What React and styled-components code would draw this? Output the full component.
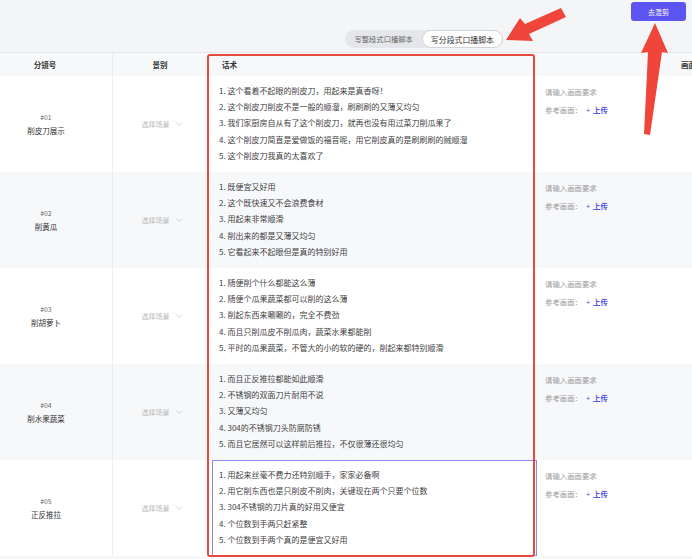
import React from "react";
import styled, { createGlobalStyle, css } from "styled-components";

const GlobalStyle = createGlobalStyle`
  html, body {
    margin: 0;
    padding: 0;
    overflow: hidden;
    background: #fff;
  }
  body {
    font-family: "Noto Sans CJK SC", "Noto Sans", sans-serif;
  }
`;

const COLS = "113px 94px 328px 307px";

const Page = styled.div`
  position: relative;
  width: 100vw;
  height: 100vh;
  overflow: hidden;
`;

const Toolbar = styled.header`
  box-sizing: border-box;
  height: 53px;
  display: flex;
  flex-direction: column;
  background: #f4f5f7;
  border-bottom: 1px solid #e6e7ea;
`;

const ButtonRow = styled.div`
  display: flex;
  justify-content: flex-end;
  padding: 2px 6px 0 0;
`;

const MixButton = styled.button`
  width: 55px;
  height: 19px;
  border: none;
  border-radius: 3px;
  background: #5c55f1;
  color: #fff;
  font-family: inherit;
  font-size: 7px;
  padding: 0;
  cursor: pointer;
`;

const ToggleRow = styled.div`
  display: flex;
  justify-content: flex-end;
  padding: 9px 189px 0 0;
`;

const Toggle = styled.div`
  display: flex;
  align-items: center;
  height: 18px;
  border-radius: 9px;
  background: #e5e6e9;
`;

const ToggleOption = styled.div`
  box-sizing: border-box;
  height: 18px;
  display: flex;
  align-items: center;
  padding: 0 9px;
  border-radius: 9px;
  font-size: 7.3px;
  color: #666;
  white-space: nowrap;
  ${(p) =>
    p.$active &&
    css`
      background: #fff;
      border: 1px solid #d3d4d8;
      color: #333;
      font-size: 7.9px;
      padding: 0 8px;
    `}
`;

const Table = styled.div`
  position: relative;
`;

const HeaderRow = styled.div`
  display: grid;
  grid-template-columns: ${COLS};
  height: 23px;
  background: #f7f8fa;
  font-size: 7.5px;
  font-weight: 600;
  color: #333;
`;

const HeadCell = styled.div`
  display: flex;
  align-items: center;
  justify-content: ${(p) => (p.$left ? "flex-start" : "center")};
  padding-left: ${(p) => (p.$left ? "15px" : "0")};
  padding-right: ${(p) => (p.$first ? "22px" : "0")};
  border-right: ${(p) => (p.$first ? "1px solid #eceef0" : "none")};
  white-space: nowrap;
`;

const Row = styled.div`
  display: grid;
  grid-template-columns: ${COLS};
  height: 96px;
  background: ${(p) => (p.$shade ? "#f7f8fa" : "#fff")};
`;

const IdCell = styled.div`
  display: flex;
  flex-direction: column;
  align-items: center;
  justify-content: center;
  padding-right: 20px;
  border-right: 1px solid #eceef0;
`;

const ShotNo = styled.span`
  font-size: 6.8px;
  line-height: 13px;
  color: #666;
`;

const ShotName = styled.span`
  font-size: 7.5px;
  line-height: 13px;
  color: #333;
`;

const SceneCell = styled.div`
  display: flex;
  align-items: center;
  justify-content: center;
  gap: 6px;
  padding-left: 4px;
  font-size: 7px;
  color: #b8b8b8;
`;

const ScriptCell = styled.div`
  position: relative;
  padding: 7px 0 0 12px;
  ${(p) =>
    p.$active &&
    css`
      &::after {
        content: "";
        position: absolute;
        left: 5px;
        right: -2px;
        top: 0;
        bottom: 0;
        border: 1px solid #8f89e6;
      }
    `}
`;

const ScriptLine = styled.div`
  font-size: 8px;
  line-height: 16.2px;
  color: #3f3f3f;
  white-space: nowrap;
`;

const VisualCell = styled.div`
  padding: 10px 0 0 10px;
  font-size: 7.4px;
  color: #9a9a9a;
  white-space: nowrap;
`;

const VisualLine = styled.div`
  line-height: 12px;
  margin-bottom: 6px;
`;

const Upload = styled.span`
  color: #5450e8;
  margin-left: 4px;
  b {
    font-weight: 700;
    margin-left: 3px;
  }
`;

const RedFrame = styled.div`
  position: absolute;
  top: 1px;
  left: 207px;
  width: 328px;
  height: 503px;
  box-sizing: border-box;
  border: 2px solid #e64a3d;
  border-radius: 3px;
  pointer-events: none;
`;

const Arrows = styled.svg`
  position: absolute;
  top: 0;
  left: 0;
  pointer-events: none;
  z-index: 2;
`;

const shots = [
  {
    no: "#01",
    name: "削皮刀展示",
    lines: [
      "这个看着不起眼的削皮刀，用起来是真香呀！",
      "这个削皮刀削皮不是一般的顺溜，刷刷刷的又薄又均匀",
      "我们家厨房自从有了这个削皮刀，就再也没有用过菜刀削瓜果了",
      "这个削皮刀简直是爱做饭的福音呢，用它削皮真的是刷刷刷的贼顺溜",
      "这个削皮刀我真的太喜欢了",
    ],
  },
  {
    no: "#02",
    name: "削黄瓜",
    lines: [
      "既便宜又好用",
      "这个既快速又不会浪费食材",
      "用起来非常顺滑",
      "削出来的都是又薄又均匀",
      "它看起来不起眼但是真的特别好用",
    ],
  },
  {
    no: "#03",
    name: "削胡萝卜",
    lines: [
      "随便削个什么都能这么薄",
      "随便个瓜果蔬菜都可以削的这么薄",
      "削起东西来唰唰的，完全不费劲",
      "而且只削瓜皮不削瓜肉，蔬菜水果都能削",
      "平时的瓜果蔬菜，不管大的小的软的硬的，削起来都特别顺滑",
    ],
  },
  {
    no: "#04",
    name: "削水果蔬菜",
    lines: [
      "而且正反推拉都能如此顺滑",
      "不锈钢的双面刀片耐用不说",
      "又薄又均匀",
      "304的不锈钢刀头防腐防锈",
      "而且它居然可以这样前后推拉，不仅很薄还很均匀",
    ],
  },
  {
    no: "#05",
    name: "正反推拉",
    lines: [
      "用起来丝毫不费力还特别顺手，家家必备啊",
      "用它削东西也是只削皮不削肉，关键现在两个只要个位数",
      "304不锈钢的刀片真的好用又便宜",
      "个位数到手两只赶紧整",
      "个位数到手两个真的是便宜又好用",
    ],
  },
];

const Chevron = () => (
  <svg width="7" height="4" viewBox="0 0 7 4">
    <path d="M0.5 0.5 L3.5 3.3 L6.5 0.5" fill="none" stroke="#c8c8c8" strokeWidth="0.8" />
  </svg>
);

const App = () => {
  return (
    <Page>
      <GlobalStyle />
      <Toolbar>
        <ButtonRow>
          <MixButton>去混剪</MixButton>
        </ButtonRow>
        <ToggleRow>
          <Toggle>
            <ToggleOption>写整段式口播脚本</ToggleOption>
            <ToggleOption $active>写分段式口播脚本</ToggleOption>
          </Toggle>
        </ToggleRow>
      </Toolbar>

      <Table>
        <HeaderRow>
          <HeadCell $first>分镜号</HeadCell>
          <HeadCell>景别</HeadCell>
          <HeadCell $left>话术</HeadCell>
          <HeadCell>画面</HeadCell>
        </HeaderRow>
        {shots.map((shot, i) => (
          <Row key={shot.no} $shade={i % 2 === 1}>
            <IdCell>
              <ShotNo>{shot.no}</ShotNo>
              <ShotName>{shot.name}</ShotName>
            </IdCell>
            <SceneCell>
              选择场景 <Chevron />
            </SceneCell>
            <ScriptCell $active={i === shots.length - 1}>
              {shot.lines.map((line, j) => (
                <ScriptLine key={j}>{`${j + 1}. ${line}`}</ScriptLine>
              ))}
            </ScriptCell>
            <VisualCell>
              <VisualLine>请输入画面要求</VisualLine>
              <VisualLine>
                参考画面：
                <Upload>
                  +<b>上传</b>
                </Upload>
              </VisualLine>
            </VisualCell>
          </Row>
        ))}
        <Row $shade />
        <RedFrame />
      </Table>

      <Arrows width="692" height="559" viewBox="0 0 692 559">
        <polygon
          fill="#f0453a"
          points="561,8 525,24 520,18 506,40 533,41 529,34 566,17"
        />
        <polygon
          fill="#f0453a"
          points="655,23 668,53 662,52 650,135 644,134 648,52 641,53"
        />
      </Arrows>
    </Page>
  );
};

export default App;
